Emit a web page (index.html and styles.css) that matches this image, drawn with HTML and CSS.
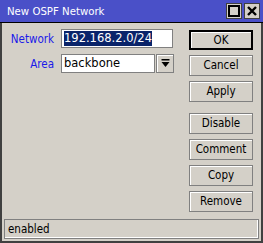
FILE: index.html
```html
<!DOCTYPE html>
<html>
<head>
<meta charset="utf-8">
<link rel="stylesheet" href="styles.css">
</head>
<body>
<div class="window">
  <div class="titlebar">
    <span class="title">New OSPF Network</span>
    <div class="tbtns">
      <span class="tbtn"><svg width="12" height="12" viewBox="0 0 12 12"><rect x="1" y="1" width="10" height="10" fill="none" stroke="#000" stroke-width="2"/></svg></span>
      <span class="tbtn"><svg width="12" height="12" viewBox="0 0 12 12"><path d="M2 2 L10 10 M10 2 L2 10" stroke="#000" stroke-width="2.4"/></svg></span>
    </div>
  </div>
  <div class="body">
    <div class="form">
      <div class="row">
        <label class="lbl">Network</label>
        <div class="field wide"><span class="sel">192.168.2.0/24</span></div>
      </div>
      <div class="row">
        <label class="lbl">Area</label>
        <div class="field narrow">backbone</div>
        <div class="drop"><svg width="9" height="9" viewBox="0 0 9 9"><rect x="0.5" y="0" width="8" height="1.5" fill="#000"/><path d="M0.5 3 H8.5 L4.5 8 Z" fill="#000"/></svg></div>
      </div>
    </div>
    <div class="buttons">
      <div class="group">
        <div class="btn def">OK</div>
        <div class="btn">Cancel</div>
        <div class="btn">Apply</div>
      </div>
      <div class="group">
        <div class="btn">Disable</div>
        <div class="btn">Comment</div>
        <div class="btn">Copy</div>
        <div class="btn">Remove</div>
      </div>
    </div>
  </div>
  <div class="status">enabled</div>
</div>
</body>
</html>
```

FILE: styles.css
```css
html, body {
  margin: 0;
  padding: 0;
}
body {
  width: 263px;
  height: 243px;
  overflow: hidden;
  font-family: "DejaVu Sans Condensed", "DejaVu Sans", sans-serif;
  font-stretch: condensed;
  font-size: 11.5px;
  color: #000;
}
.window {
  width: 263px;
  height: 243px;
  box-sizing: border-box;
  background: #d4d0c8;
  border-left: 2px solid #404040;
  border-right: 2px solid #404040;
  border-bottom: 2px solid #404040;
  display: flex;
  flex-direction: column;
}
.titlebar {
  height: 23px;
  margin: 0 -2px;
  background: #4a50c8;
  display: flex;
  align-items: center;
  justify-content: space-between;
  padding: 0 3px 0 7px;
  box-sizing: border-box;
  border-bottom: 1px solid #000;
}
.title {
  color: #fff;
  font-size: 11.3px;
}
.tbtns {
  display: flex;
  gap: 2px;
}
.tbtn {
  width: 16px;
  height: 16px;
  box-sizing: border-box;
  background: #d4d0c8;
  border: 1px solid #404040;
  display: flex;
  align-items: center;
  justify-content: center;
}
.body {
  flex: 1;
  display: flex;
  justify-content: space-between;
  padding: 6px 8px 0 0;
}
.form {
  display: flex;
  flex-direction: column;
  gap: 6px;
}
.row {
  display: flex;
  align-items: center;
  height: 19px;
}
.lbl {
  width: 52px;
  text-align: right;
  color: #1a1ae8;
  margin-right: 7px;
}
.field {
  height: 19px;
  box-sizing: border-box;
  background: #fff;
  border: 1px solid #808080;
  box-shadow: inset 1px 1px 0 #fff;
  padding: 1px 2px;
  font-family: "DejaVu Sans", sans-serif;
  font-stretch: normal;
  line-height: 15px;
  white-space: nowrap;
}
.wide { width: 112px; }
.narrow { width: 94px; }
.sel {
  background: #0a246a;
  color: #fff;
  display: inline-block;
}
.drop {
  width: 18px;
  height: 19px;
  box-sizing: border-box;
  margin-left: 1px;
  border: 1px solid #808080;
  box-shadow: inset 1px 1px 0 #fff;
  display: flex;
  align-items: center;
  justify-content: center;
}
.buttons {
  display: flex;
  flex-direction: column;
  gap: 11px;
  padding-top: 1px;
}
.group {
  display: flex;
  flex-direction: column;
  gap: 5px;
}
.btn {
  width: 64px;
  height: 21px;
  box-sizing: border-box;
  border: 1px solid #808080;
  box-shadow: inset 1px 1px 0 #fff;
  text-align: center;
  line-height: 19px;
}
.btn.def {
  height: 20px;
  border: 2px solid #000;
  line-height: 16px;
}
.status {
  margin: 0 2px 2px 2px;
  height: 20px;
  box-sizing: border-box;
  border: 1px solid #808080;
  box-shadow: inset -1px -1px 0 #fff;
  padding-left: 3px;
  line-height: 18px;
}
```
